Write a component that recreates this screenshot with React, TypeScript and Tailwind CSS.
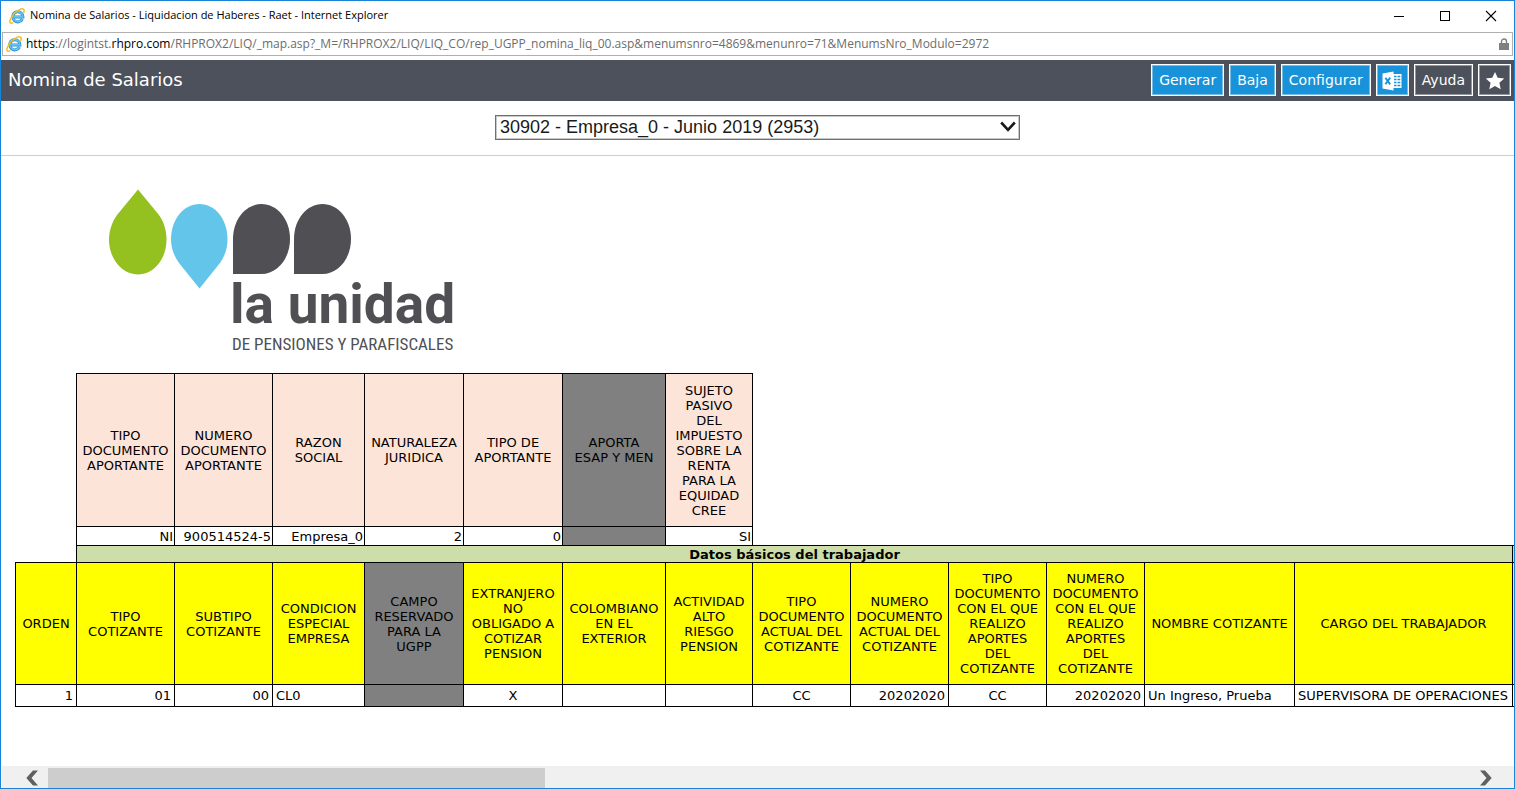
import React from 'react';
import clsx from 'clsx';

type Tone = 'peach' | 'yellow' | 'gray' | 'white';
type Align = 'left' | 'center' | 'right';

type Column = {
  title: string;
  value: string;
  align?: Align;
  disabled?: boolean;
};

const TONES: Record<Tone, string> = {
  peach: 'bg-[#fde4d8]',
  yellow: 'bg-[#ffff00]',
  gray: 'bg-[#808080]',
  white: 'bg-white',
};

const ALIGNS: Record<Align, string> = {
  left: 'text-left',
  center: 'text-center',
  right: 'text-right',
};

const COL_WIDTHS = [
  'w-[61px]',
  'w-[98px]',
  'w-[98px]',
  'w-[92px]',
  'w-[99px]',
  'w-[99px]',
  'w-[103px]',
  'w-[87px]',
  'w-[98px]',
  'w-[98px]',
  'w-[98px]',
  'w-[98px]',
  'w-[150px]',
  'w-[218px]',
  'w-[98px]',
];

const employerColumns: Column[] = [
  { title: 'TIPO\nDOCUMENTO\nAPORTANTE', value: 'NI' },
  { title: 'NUMERO\nDOCUMENTO\nAPORTANTE', value: '900514524-5' },
  { title: 'RAZON\nSOCIAL', value: 'Empresa_0' },
  { title: 'NATURALEZA\nJURIDICA', value: '2' },
  { title: 'TIPO DE\nAPORTANTE', value: '0' },
  { title: 'APORTA\nESAP Y MEN', value: '', disabled: true },
  {
    title: 'SUJETO\nPASIVO\nDEL\nIMPUESTO\nSOBRE LA\nRENTA\nPARA LA\nEQUIDAD\nCREE',
    value: 'SI',
  },
];

const workerColumns: Column[] = [
  { title: 'ORDEN', value: '1' },
  { title: 'TIPO\nCOTIZANTE', value: '01' },
  { title: 'SUBTIPO\nCOTIZANTE', value: '00' },
  { title: 'CONDICION\nESPECIAL\nEMPRESA', value: 'CL0', align: 'left' },
  { title: 'CAMPO\nRESERVADO\nPARA LA\nUGPP', value: '', disabled: true },
  { title: 'EXTRANJERO\nNO\nOBLIGADO A\nCOTIZAR\nPENSION', value: 'X', align: 'center' },
  { title: 'COLOMBIANO\nEN EL\nEXTERIOR', value: '' },
  { title: 'ACTIVIDAD\nALTO\nRIESGO\nPENSION', value: '' },
  { title: 'TIPO\nDOCUMENTO\nACTUAL DEL\nCOTIZANTE', value: 'CC', align: 'center' },
  { title: 'NUMERO\nDOCUMENTO\nACTUAL DEL\nCOTIZANTE', value: '20202020' },
  {
    title: 'TIPO\nDOCUMENTO\nCON EL QUE\nREALIZO\nAPORTES\nDEL\nCOTIZANTE',
    value: 'CC',
    align: 'center',
  },
  {
    title: 'NUMERO\nDOCUMENTO\nCON EL QUE\nREALIZO\nAPORTES\nDEL\nCOTIZANTE',
    value: '20202020',
  },
  { title: 'NOMBRE COTIZANTE', value: 'Un Ingreso, Prueba', align: 'left' },
  { title: 'CARGO DEL TRABAJADOR', value: 'SUPERVISORA DE OPERACIONES', align: 'left' },
];

const BrowserIcon = () => (
  <svg viewBox="0 0 16 16" className="size-4 shrink-0" aria-hidden="true">
    <path
      d="M13.4 11A5.1 5.1 0 1 1 13.9 8.9H5"
      fill="none"
      stroke="#2b8fd0"
      strokeWidth="3"
    />
    <path
      d="M13.2 11A5 5 0 1 1 13.8 8.9H5"
      fill="none"
      stroke="#63c3f3"
      strokeWidth="1.6"
    />
    <path
      d="M3.8 14.9C1 16 .2 14.2 1.5 11.2C3.2 7.400 7 3.200 11 1.400C14 .1 15.900 1 14.800 4.200"
      fill="none"
      stroke="#f5bd1f"
      strokeWidth="1.500"
      strokeLinecap="round"
    />
  </svg>
);

const TitleBar = () => (
  <div className="flex h-[31px] items-center justify-between pb-[2px] pl-2 pr-[17px] text-black">
    <div className="flex items-center gap-[5px] text-[11px] whitespace-nowrap">
      <BrowserIcon />
      <span>Nomina de Salarios - Liquidacion de Haberes - Raet - Internet Explorer</span>
    </div>
    <div className="flex items-center gap-[34px]">
      <button aria-label="Minimizar">
        <svg viewBox="0 0 12 12" className="size-3" shapeRendering="crispEdges">
          <path d="M1 6.500H11" stroke="currentColor" />
        </svg>
      </button>
      <button aria-label="Maximizar">
        <svg viewBox="0 0 12 12" className="size-3" shapeRendering="crispEdges">
          <path d="M1.500 1.500H10.500V10.500H1.500Z" fill="none" stroke="currentColor" />
        </svg>
      </button>
      <button aria-label="Cerrar">
        <svg viewBox="0 0 12 12" className="size-3">
          <path d="M1 1L11 11M11 1L1 11" stroke="currentColor" strokeWidth="1.100" />
        </svg>
      </button>
    </div>
  </div>
);

const AddressBar = () => (
  <div className="mx-px flex h-6 items-center gap-1 border border-[#b0b0b0] px-[3px] text-[12px] whitespace-nowrap text-[#6d6d6d]">
    <BrowserIcon />
    <div className="flex-1">
      <span className="text-black">https</span>://logintst.
      <span className="text-black">rhpro.com</span>
      /RHPROX2/LIQ/_map.asp?_M=/RHPROX2/LIQ/LIQ_CO/rep_UGPP_nomina_liq_00.asp&amp;menumsnro=4869&amp;menunro=71&amp;MenumsNro_Modulo=2972
    </div>
    <svg viewBox="0 0 10 12" className="h-3 w-[10px]" aria-hidden="true">
      <path d="M2.500 6V3.500A2.500 2.500 0 0 1 7.500 3.500V6" fill="none" stroke="#808080" strokeWidth="1.400" />
      <rect y="5" width="10" height="7" fill="#808080" />
    </svg>
  </div>
);

type ToolButtonProps = {
  label?: string;
  dark?: boolean;
  children: React.ReactNode;
};

const ToolButton = ({ label, dark, children }: ToolButtonProps) => (
  <button
    aria-label={label}
    className={clsx(
      'flex h-8 items-center justify-center border border-white pt-px inset-ring inset-ring-white/40',
      label ? 'w-[33px]' : 'px-[7px]',
      dark ? 'bg-[#4d515c]' : 'bg-[#1892d8]',
    )}
  >
    {children}
  </button>
);

const ExcelIcon = () => (
  <svg viewBox="0 0 20 20" className="size-5">
    <path d="M11 3H19.500V17H11Z" fill="#fff" />
    <path
      d="M12 5.500H14.500M12 8.500H14.500M12 11.500H14.500M12 14.500H14.500M15.500 5.500H18.300M15.500 8.500H18.300M15.500 11.500H18.300M15.500 14.500H18.300"
      stroke="#1892d8"
      strokeWidth="1.500"
    />
    <path d="M.5 2.600L11.500.5V19.500L.5 17.400Z" fill="#fff" />
    <path d="M3.400 6.800L8.200 13.400M8.200 6.600L3.400 13.200" stroke="#1892d8" strokeWidth="1.900" />
  </svg>
);

const StarIcon = () => (
  <svg viewBox="0 0 20 20" className="size-5">
    <path
      d="M10 1L12.700 6.800L19.200 7.500L14.400 11.800L15.700 18.300L10 15L4.300 18.300L5.600 11.800L.8 7.500L7.300 6.800Z"
      fill="#fff"
    />
  </svg>
);

const Toolbar = () => (
  <header className="mt-1 flex h-[41px] items-start justify-between bg-[#4d515c] pt-1 pl-[7px] pr-[3px] font-['DejaVu_Sans',sans-serif] text-white">
    <h1 className="text-[18px] leading-8">Nomina de Salarios</h1>
    <div className="flex gap-[5px] text-[14px]">
      <ToolButton>Generar</ToolButton>
      <ToolButton>Baja</ToolButton>
      <ToolButton>Configurar</ToolButton>
      <ToolButton label="Exportar a Excel">
        <ExcelIcon />
      </ToolButton>
      <ToolButton dark>Ayuda</ToolButton>
      <ToolButton label="Favorito" dark>
        <StarIcon />
      </ToolButton>
    </div>
  </header>
);

const ProcessSelect = () => (
  <div className="flex h-[55px] justify-center border-b border-[#cfcfcf] pt-[14px]">
    <div className="relative w-[525px]">
      <select
        aria-label="Proceso"
        className="block h-[25px] w-full appearance-none border border-[#707070] bg-white pl-1 font-['Liberation_Sans',sans-serif] text-[18px] leading-[23px] text-[#1a1a1a] inset-ring inset-ring-[#c8c8c8]"
      >
        <option>30902 - Empresa_0 - Junio 2019 (2953)</option>
      </select>
      <svg
        viewBox="0 0 16 12"
        className="pointer-events-none absolute top-[6px] right-1 h-3 w-4"
        aria-hidden="true"
      >
        <path d="M1.200 1.500L8 8.800L14.800 1.500" fill="none" stroke="#1a1a1a" strokeWidth="2.600" />
      </svg>
    </div>
  </div>
);

const Logo = () => (
  <svg viewBox="0 0 360 170" className="ml-[104px] h-[170px] w-[360px]" role="img" aria-label="La Unidad">
    <path
      d="M33 3.500L54 29C59 36 61.500 45 61.500 53.500C61.500 73 49 88.500 33 88.500C17 88.500 4 73 4 53.500C4 45 7 36 12 29Z"
      fill="#94c11f"
    />
    <path
      d="M94.500 102.500L115 77C120 70 122.500 62 122.500 53.500C122.500 33 110 18 94.500 18C79 18 66 33 66 53.500C66 62 69 70 74 77Z"
      fill="#63c5ea"
    />
    <path d="M128 88V53C128 33 141 18 156.500 18C172 18 185 33 185 53C185 73 172 88 156.500 88Z" fill="#504f54" />
    <path d="M189 88V53C189 33 202 18 217.500 18C233 18 246 33 246 53C246 73 233 88 217.500 88Z" fill="#504f54" />
    <text x="125" y="137" fill="#504f54" className="font-['Roboto',sans-serif] text-[55px] font-bold">
      la unidad
    </text>
    <text
      x="127"
      y="164"
      fill="#504f54"
      className="font-['Liberation_Sans_Narrow','Roboto_Condensed',sans-serif] text-[17px]"
    >
      DE PENSIONES Y PARAFISCALES
    </text>
  </svg>
);

const HeaderCell = ({ column, tone }: { column: Column; tone: Tone }) => (
  <th
    scope="col"
    className={clsx(
      'border border-black p-0 align-middle font-normal whitespace-pre',
      TONES[column.disabled ? 'gray' : tone],
    )}
  >
    {column.title}
  </th>
);

const ReportTable = () => (
  <table className="mt-[17px] ml-[14px] w-[1595px] table-fixed border-collapse text-[13px] leading-[15px] whitespace-nowrap text-black">
    <colgroup>
      {COL_WIDTHS.map((width, i) => (
        <col key={i} className={width} />
      ))}
    </colgroup>
    <tbody>
      <tr className="h-[153px]">
        <td />
        {employerColumns.map((column) => (
          <HeaderCell key={column.title} column={column} tone="peach" />
        ))}
      </tr>
      <tr className="h-[19px]">
        <td />
        {employerColumns.map((column) => (
          <td
            key={column.title}
            className={clsx(
              'border border-black px-px py-0 text-right',
              TONES[column.disabled ? 'gray' : 'white'],
            )}
          >
            {column.value}
          </td>
        ))}
      </tr>
      <tr className="h-[17px]">
        <td />
        <th colSpan={13} className="border border-black bg-[#cedeaa] p-0 font-bold">
          Datos básicos del trabajador
        </th>
        <th className="border border-black bg-[#cedeaa] p-0" />
      </tr>
      <tr className="h-[122px]">
        {workerColumns.map((column, i) => (
          <HeaderCell key={i} column={column} tone="yellow" />
        ))}
        <th className="border border-black bg-[#ffff00] p-0" />
      </tr>
      <tr className="h-[22px]">
        {workerColumns.map((column, i) => (
          <td
            key={i}
            className={clsx(
              'border border-black px-[3px] py-0',
              TONES[column.disabled ? 'gray' : 'white'],
              ALIGNS[column.align ?? 'right'],
            )}
          >
            {column.value}
          </td>
        ))}
        <td className="border border-black" />
      </tr>
    </tbody>
  </table>
);

const Arrow = ({ flip }: { flip?: boolean }) => (
  <svg viewBox="0 0 12 16" className={clsx('h-4 w-3', flip && 'rotate-180')} aria-hidden="true">
    <path d="M7 .5H12L5.500 8L12 15.500H7L.3 8Z" fill="#606060" />
  </svg>
);

const ScrollBar = () => (
  <div className="ml-px flex h-[22px] bg-[#f0f0f0] pt-[2px]">
    <button aria-label="Desplazar a la izquierda" className="flex w-[46px] items-center justify-end pr-[10px]">
      <Arrow />
    </button>
    <div className="flex-1">
      <div className="h-full w-[35%] bg-[#cdcdcd]" />
    </div>
    <button aria-label="Desplazar a la derecha" className="flex w-[46px] items-center justify-start pl-[12px]">
      <Arrow flip />
    </button>
  </div>
);

const App = () => (
  <div className="flex min-h-screen flex-col overflow-hidden border border-[#1883d7] bg-white font-['Open_Sans',sans-serif]">
    <TitleBar />
    <AddressBar />
    <Toolbar />
    <ProcessSelect />
    <main className="flex-1 overflow-hidden pt-[30px] font-['DejaVu_Sans',sans-serif]">
      <Logo />
      <ReportTable />
    </main>
    <ScrollBar />
  </div>
);

export default App;
